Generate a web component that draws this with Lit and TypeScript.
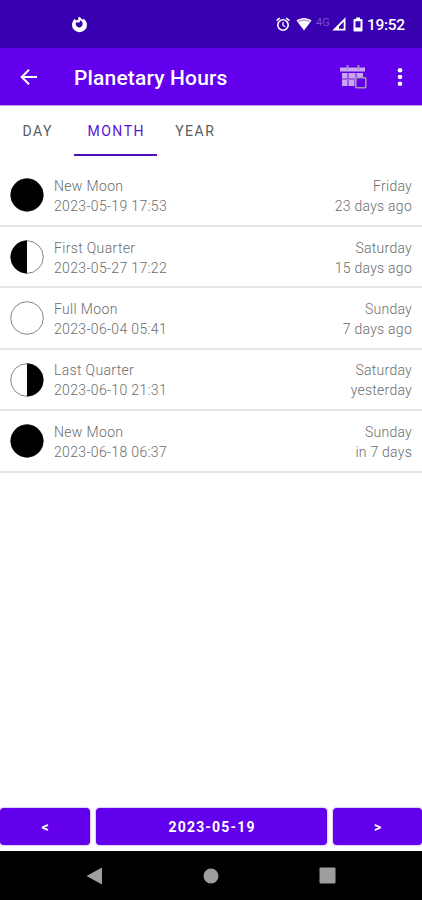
import { LitElement, html, css, svg } from "lit";
import { customElement, property } from "lit/decorators.js";

type Phase = "new" | "first" | "full" | "last";

interface MoonEvent {
  phase: Phase;
  name: string;
  date: string;
  day: string;
  relative: string;
}

const EVENTS: MoonEvent[] = [
  { phase: "new", name: "New Moon", date: "2023-05-19 17:53", day: "Friday", relative: "23 days ago" },
  { phase: "first", name: "First Quarter", date: "2023-05-27 17:22", day: "Saturday", relative: "15 days ago" },
  { phase: "full", name: "Full Moon", date: "2023-06-04 05:41", day: "Sunday", relative: "7 days ago" },
  { phase: "last", name: "Last Quarter", date: "2023-06-10 21:31", day: "Saturday", relative: "yesterday" },
  { phase: "new", name: "New Moon", date: "2023-06-18 06:37", day: "Sunday", relative: "in 7 days" },
];

@customElement("moon-icon")
export class MoonIcon extends LitElement {
  @property() phase: Phase = "new";

  static styles = css`
    :host { display: block; width: 34px; height: 34px; }
    svg { display: block; }
  `;

  render() {
    const dark = {
      new: svg`<circle cx="17" cy="17" r="16.4" fill="#000"/>`,
      first: svg`<path d="M17 .6A16.4 16.4 0 0 0 17 33.4Z" fill="#000"/>`,
      full: svg``,
      last: svg`<path d="M17 .6A16.4 16.4 0 0 1 17 33.4Z" fill="#000"/>`,
    }[this.phase];
    return html`<svg width="34" height="34" viewBox="0 0 34 34">
      <circle cx="17" cy="17" r="16.3" fill="#fff" stroke="#666" stroke-width=".8"/>${dark}
    </svg>`;
  }
}

@customElement("status-bar")
export class StatusBar extends LitElement {
  static styles = css`
    :host { display: flex; align-items: center; height: 48px; box-sizing: border-box; background: #3800b0; color: #fff; padding: 0 17px 0 71px; }
    svg { display: block; flex: none; }
    .gap { flex: 1; }
    .alarm { margin-right: 6px; }
    .net { font-size: 11px; line-height: 12px; color: #7650cb; margin: 0 1px 3px 4px; width: 15px; }
    .battery { margin: 0 4px 0 7px; }
    .time { font-size: 15.5px; font-weight: 500; line-height: 20px; width: 38px; white-space: nowrap; letter-spacing: -.3px; margin-top: 1px; }
  `;

  render() {
    return html`
      <svg width="17" height="17" viewBox="0 0 17 17">
        <path d="M8.2 .8C10 1.6 10.9 2.8 11 4L12.6 2.8C15 4.7 16 6.5 16 9A7.5 7.2 0 0 1 1 9C1 7.5 1.4 5.8 2.6 4.2L3.3 2.7L5.2 4.4C6 4 6.8 4 7.5 4.3C6.8 2.9 7.2 1.7 8.2 .8Z" fill="#fff"/>
        <path d="M5.2 6.2L7.6 6.6C8.6 6.6 9.2 5.8 8.8 4.2C11.4 5 12.2 7.4 11.4 9.3C10.600 11.2 8.4 11.9 6.600 11C4.700 10 4.300 7.800 5.200 6.200Z" fill="#3800b0"/>
      </svg>
      <span class="gap"></span>
      <svg class="alarm" width="14" height="15" viewBox="0 0 14 15" fill="none" stroke="#fff">
        <circle cx="7" cy="8" r="5.2" stroke-width="1.6"/>
        <path d="M.6 3.6L3.8 1M13.4 3.6L10.2 1" stroke-width="1.6"/>
        <path d="M7 5V8.5L9.4 9.8" stroke-width="1.2"/>
      </svg>
      <svg width="16" height="14" viewBox="0 0 16 14">
        <path d="M.5 3.5C5 0 11 0 15.5 3.5L8 13.5Z" fill="#fff"/>
        <path d="M2.5 4.5C6 2.6 10 2.6 13.5 4.5" fill="none" stroke="#3800b0" stroke-width=".6"/>
      </svg>
      <span class="net">4G</span>
      <svg width="14" height="14" viewBox="0 0 14 14">
        <path d="M13.5 .3V13.5H.3ZM11.7 4.7L7 9.4V11.7H11.7Z" fill="#fff" fill-rule="evenodd"/>
      </svg>
      <svg class="battery" width="10" height="15" viewBox="0 0 10 15">
        <path d="M3 .5H7V2H8.5Q9.5 2 9.5 3V13.5Q9.5 14.5 8.5 14.5H1.5Q.5 14.5 .5 13.5V3Q.5 2 1.5 2H3ZM2.5 4.3V10.5H7.5V4.3Z" fill="#fff" fill-rule="evenodd"/>
      </svg>
      <span class="time">19:52</span>
    `;
  }
}

@customElement("app-root")
export class AppRoot extends LitElement {
  static styles = css`
    :host { display: flex; flex-direction: column; width: 422px; height: 900px; overflow: hidden; background: #fff; font-family: Roboto, sans-serif; }
    svg { display: block; flex: none; }
    .appbar { display: flex; align-items: center; height: 58px; background: #6200ee; color: #fff; padding: 0 15px 0 20px; border-bottom: 1px solid #b9a0e6; box-sizing: border-box; }
    .title { flex: 1; margin: 3px 0 0 36px; font-size: 21px; font-weight: 500; line-height: 28px; letter-spacing: .16px; }
    .more { margin-left: 26px; }
    .tabs { display: flex; height: 50px; margin-bottom: 9.7px; }
    .tab { box-sizing: border-box; height: 50px; padding-top: 15px; font-size: 14px; line-height: 20px; font-weight: 400; letter-spacing: 1.5px; text-align: center; text-indent: 1.5px; color: #5c5c5c; border-bottom: 2px solid transparent; }
    .day { width: 74px; }
    .month { width: 83px; color: #5a13d8; border-bottom-color: #4b0fc0; }
    .year { width: 75px; }
    .row { display: flex; box-sizing: border-box; height: 61.4px; padding: 10.5px 10px 0 10px; border-bottom: 2px solid #e6e6e6; font-size: 14px; line-height: 20px; letter-spacing: .34px; color: #6c6c6c; font-weight: 300; }
    moon-icon { margin: 2.2px 10px 0 0; }
    .left { flex: 1; }
    .right { text-align: right; letter-spacing: .25px; }
    .space { flex: 1; }
    .buttons { display: flex; gap: 6px; height: 37px; margin-bottom: 6px; }
    .button { display: flex; align-items: center; justify-content: center; border-radius: 4px; background: #6200ee; color: #fff; font-size: 14px; font-weight: 700; letter-spacing: 1.2px; text-indent: 1.2px; box-shadow: 0 0 2px #8e55e5; }
    .side { width: 90px; }
    .next { width: 89px; }
    .current { flex: 1; }
    .nav { display: flex; align-items: center; height: 49px; box-sizing: border-box; padding: 0 86px; justify-content: space-between; background: #000; }
  `;

  render() {
    return html`
      <status-bar></status-bar>
      <header class="appbar">
        <svg width="18" height="18" viewBox="0 0 18 18" fill="none" stroke="#fff" stroke-width="2">
          <path d="M17 9H2M9 1.7L1.7 9L9 16.3"/>
        </svg>
        <span class="title">Planetary Hours</span>
        <svg width="27" height="25" viewBox="0 0 27 25">
          <path d="M0 3.5H25V7.5H0Z" fill="#cba5f4"/>
          <path d="M7.5 1V6M18.5 1V6" stroke="#aa92c8" stroke-width="1.8"/>
          <path d="M2 9H7.5V14.5H2ZM9 9H15.5V14.5H9ZM17 9H23V13H17ZM2 16H7.5V22H2ZM9 16H14.5V22H9Z" fill="#cba5f4"/>
          <path d="M8.2 9V22M16.2 9V13M2 15.2H15" stroke="#9c68df" stroke-width="1.4"/>
          <rect x="15.8" y="13.8" width="10" height="10" rx=".8" fill="#6200ee" stroke="#a59aad" stroke-width="1.6"/>
        </svg>
        <svg class="more" width="14" height="18" viewBox="0 0 14 18" fill="#fff">
          <circle cx="7" cy="2.3" r="2.3"/><circle cx="7" cy="9" r="2.3"/><circle cx="7" cy="15.7" r="2.3"/>
        </svg>
      </header>
      <nav class="tabs">
        <div class="tab day">DAY</div>
        <div class="tab month">MONTH</div>
        <div class="tab year">YEAR</div>
      </nav>
      <main>
        ${EVENTS.map(
          (e) => html`<div class="row">
            <moon-icon .phase=${e.phase}></moon-icon>
            <div class="left"><div>${e.name}</div><div>${e.date}</div></div>
            <div class="right"><div>${e.day}</div><div>${e.relative}</div></div>
          </div>`
        )}
      </main>
      <div class="space"></div>
      <div class="buttons">
        <div class="button side">&lt;</div>
        <div class="button current">2023-05-19</div>
        <div class="button next">&gt;</div>
      </div>
      <footer class="nav">
        <svg width="17" height="18" viewBox="0 0 17 18"><path d="M.5 9L16 .5V17.5Z" fill="#9e9e9e"/></svg>
        <svg width="16" height="16" viewBox="0 0 16 16"><circle cx="8" cy="8" r="7.5" fill="#9e9e9e"/></svg>
        <svg width="17" height="17" viewBox="0 0 17 17"><rect x=".5" y=".5" width="16" height="16" rx="1" fill="#9e9e9e"/></svg>
      </footer>
    `;
  }
}
